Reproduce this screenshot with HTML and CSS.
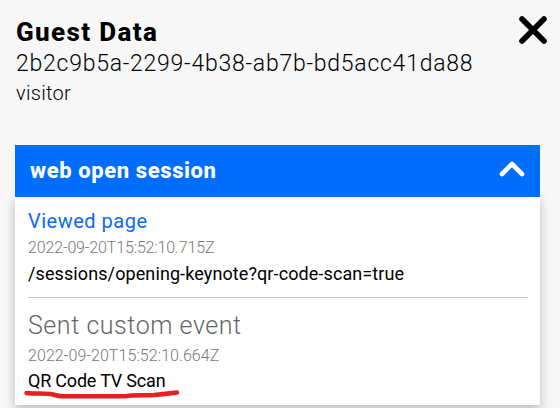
FILE: index.html
```html
<!DOCTYPE html>
<html lang="en">
<head>
<meta charset="utf-8">
<title>Guest Data</title>
<link rel="stylesheet" href="styles.css">
</head>
<body>
<header class="guest">
  <div>
    <h1 class="guest-title"><span>Guest Data</span></h1>
    <p class="guest-id"><span>2b2c9b5a-2299-4b38-ab7b-bd5acc41da88</span></p>
    <p class="guest-role"><span>visitor</span></p>
  </div>
  <svg class="close" viewBox="0 0 28 28"><path d="M3 3L25 25M25 3L3 25"/></svg>
</header>
<section class="session">
  <div class="session-bar">
    <h2 class="session-title"><span>web open session</span></h2>
    <svg class="chevron" viewBox="0 0 26 16"><path d="M3 13L13 3L23 13"/></svg>
  </div>
  <div class="events">
    <div class="event">
      <h3 class="event-link"><span>Viewed page</span></h3>
      <p class="event-time"><span>2022-09-20T15:52:10.715Z</span></p>
      <p class="event-detail path"><span>/sessions/opening-keynote?qr-code-scan=true</span></p>
    </div>
    <div class="event custom">
      <h3 class="event-name"><span>Sent custom event</span></h3>
      <p class="event-time second"><span>2022-09-20T15:52:10.664Z</span></p>
      <p class="event-detail scan"><span>QR Code TV Scan</span>
        <svg class="marker" viewBox="0 0 156 10"><path d="M2.5 3C10 4 19 3 26 4C33 5 32 6 38 6.2H102C108 4.800 120 5.500 130 5Q141 4 153 2.500"/></svg>
      </p>
    </div>
  </div>
</section>
</body>
</html>
```
FILE: styles.css
```css
* { box-sizing: border-box; }
body {
  margin: 0;
  height: 408px;
  overflow: hidden;
  padding: 17px 20px 0 15px;
  background: #f7f7f7;
  color: #000;
  font-family: Roboto, "Liberation Sans", sans-serif;
}
h1, h2, h3, p { margin: 0; white-space: nowrap; }
.guest { display: flex; justify-content: space-between; height: 128px; padding-left: 1px; }
.guest-title { font-size: 26px; line-height: 30px; font-weight: 800; letter-spacing: 1.35px; }
.guest-id { font-size: 23px; line-height: 34px; font-weight: 300; letter-spacing: .75px; }
.guest-role { font-size: 20px; line-height: 24px; font-weight: 300; letter-spacing: .3px; }
.close { width: 28px; height: 28px; margin: -1px -7px 0 0; fill: none; stroke: #000; stroke-width: 5.6; stroke-linecap: round; }
.session-bar {
  position: relative;
  display: flex;
  align-items: center;
  justify-content: space-between;
  height: 52px;
  padding: 0 15px;
  background: #006efa;
  color: #fff;
}
.session-title { font-size: 22px; line-height: 50px; font-weight: 800; letter-spacing: .6px; }
.chevron { width: 26px; height: 16px; margin-top: -5px; fill: none; stroke: #fff; stroke-width: 4.6; stroke-linecap: round; stroke-linejoin: round; }
.events { height: 208px; background: #fff; box-shadow: 0 4px 10px rgba(0, 0, 0, .25); }
.event { margin: 0 12px 0 13px; padding: 9px 0; border-bottom: 1px solid #c8c8c8; }
.event.custom { padding-top: 13px; border: 0; }
.event-link { color: #0a6af5; font-size: 20px; line-height: 30px; font-weight: 400; letter-spacing: .5px; }
.event-name { color: #666; font-size: 25px; line-height: 30px; font-weight: 300; letter-spacing: .55px; }
.event-time { color: #777; font-size: 16px; line-height: 24px; font-weight: 300; letter-spacing: -.14px; }
.event-time.second { line-height: 30px; letter-spacing: .07px; }
.event-detail { font-size: 18px; line-height: 28px; font-weight: 400; }
.event-detail.path { letter-spacing: .1px; }
.event-detail.scan { position: relative; line-height: 20px; letter-spacing: -.2px; }
.marker { position: absolute; left: -4px; top: 19px; width: 156px; height: 10px; fill: none; stroke: #e81e20; stroke-width: 4.5; stroke-linecap: round; stroke-linejoin: round; overflow: visible; }
```
